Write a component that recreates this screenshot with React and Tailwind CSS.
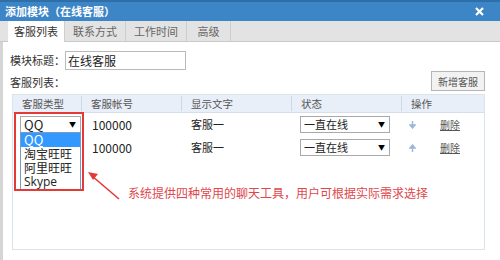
import React from "react";

const font = { fontFamily: '"Noto Sans CJK SC", "Liberation Sans", sans-serif' };

const tabs = ["客服列表", "联系方式", "工作时间", "高级"];
const rows = [
  { type: "QQ", account: "100000", text: "客服一", status: "一直在线", arrow: "down" },
  { type: "QQ", account: "100000", text: "客服一", status: "一直在线", arrow: "up" },
];

function FakeSelect({ value, className = "" }) {
  return (
    <div
      className={`flex h-[17px] items-center justify-between border border-[#a9a9a9] bg-white pl-[3px] pr-[4px] ${className}`}
    >
      <span>{value}</span>
      <span className="text-[7px] leading-none text-black">▼</span>
    </div>
  );
}

function Arrow({ dir }) {
  return (
    <svg width="7" height="8" viewBox="0 0 7 8">
      {dir === "down" ? (
        <path d="M3.5 0 V5 M1 4 L3.5 7 L6 4 Z" stroke="#9ab7dc" strokeWidth="1.4" fill="#9ab7dc" />
      ) : (
        <path d="M3.5 8 V3 M1 4 L3.5 1 L6 4 Z" stroke="#9ab7dc" strokeWidth="1.4" fill="#9ab7dc" />
      )}
    </svg>
  );
}

export default function App() {
  return (
    <div className="relative h-[260px] w-[500px] overflow-hidden bg-white text-[11px] text-[#333]" style={font}>
      {/* title bar */}
      <div className="flex h-[21px] items-center justify-between border-t-2 border-[#2f6fa8] bg-[#3c86c7] pl-[5px] pr-[16px]">
        <span className="text-[11px] font-bold text-white">添加模块（在线客服）</span>
        <svg width="9" height="9" viewBox="0 0 9 9">
          <path d="M1 1 L8 8 M8 1 L1 8" stroke="#fff" strokeWidth="2.2" />
        </svg>
      </div>

      {/* tabs */}
      <div className="flex h-[21px] items-end border-b border-[#c9c9c9] bg-[#e3e3e3] pl-[8px]">
        {tabs.map((t, i) => (
          <div
            key={t}
            className={`flex h-[20px] items-center justify-center border-r border-[#cfcfcf] ${
              i === 0 ? "w-[57px] bg-white -mb-px h-[21px]" : i === 3 ? "w-[44px]" : "w-[61px]"
            } ${i === 0 ? "text-[#333]" : "text-[#666]"}`}
          >
            {t}
          </div>
        ))}
      </div>

      <div className="flex h-[218px] border-l-[3px] border-[#d5d5d5]">
        <div className="flex-1 pl-[7px] pr-[15px]">
          <div className="mt-[9px] flex items-center">
            <span className="w-[55px]">模块标题：</span>
            <div className="flex h-[19px] w-[121px] items-center border border-[#b9b9b9] pl-[2px] text-[12px] text-[#222]">
              在线客服
            </div>
          </div>

          <div className="mt-[1px] flex items-end justify-between">
            <span className="mb-px">客服列表：</span>
            <div className="flex h-[20px] w-[54px] items-center justify-center border border-[#b5b5b5] bg-[#f2f2f2] text-[10px] text-[#555]">
              新增客服
            </div>
          </div>

          {/* table */}
          <div className="relative mt-[3px] ml-[2px] h-[156px] border border-[#dbe3ec]">
            <div className="flex h-[18px] items-center border-b border-[#d6dee9] bg-[#e9eff8] text-[10.5px] text-[#555]">
              <div className="w-[69px] border-r border-[#d0d8e3] pl-[9px]">客服类型</div>
              <div className="w-[100px] border-r border-[#d0d8e3] pl-[9px]">客服帐号</div>
              <div className="w-[110px] border-r border-[#d0d8e3] pl-[9px]">显示文字</div>
              <div className="w-[110px] border-r border-[#d0d8e3] pl-[9px]">状态</div>
              <div className="flex-1 pl-[9px]">操作</div>
            </div>

            {rows.map((r, i) => (
              <div key={i} className="flex h-[23px] items-center text-[#222]">
                <div className="w-[69px] pl-[7px]">
                  <FakeSelect value={r.type} className="w-[61px] text-[13px]" />
                </div>
                <div className="w-[100px] pl-[10px] text-[12px]">{r.account}</div>
                <div className="w-[110px] pl-[9px]">{r.text}</div>
                <div className="w-[110px] pl-[8px]">
                  <FakeSelect value={r.status} className="w-[90px] text-[11px]" />
                </div>
                <div className="flex flex-1 items-center pl-[7px]">
                  <Arrow dir={r.arrow} />
                  <span className="ml-[24px] text-[10px] text-[#555] underline">删除</span>
                </div>
              </div>
            ))}

            {/* dropdown list */}
            <div className="absolute left-[7px] top-[37px] w-[61px] border border-[#7a9cc4] bg-white text-[12px] leading-[14px] text-[#222]">
              <div className="bg-[#3399ff] pl-[3px] text-[13px] text-white">QQ</div>
              <div className="pl-[3px]">淘宝旺旺</div>
              <div className="pl-[3px]">阿里旺旺</div>
              <div className="pl-[3px]" style={{ fontFamily: '"Open Sans", sans-serif' }}>
                Skype
              </div>
            </div>

            {/* red highlight box */}
            <div className="absolute left-[1px] top-[17px] h-[79px] w-[70px] border-2 border-[#e53935]" />

            {/* annotation arrow */}
            <svg className="absolute left-[73px] top-[74px]" width="40" height="32" viewBox="0 0 40 32">
              <path d="M33 30 L6 7" stroke="#e53935" strokeWidth="1.6" />
              <path d="M2 3 L12 5 L7 11 Z" fill="#e53935" />
            </svg>

            <div className="absolute left-[115px] top-[91px] text-[12px] leading-[14px] text-[#e0474c]">
              系统提供四种常用的聊天工具，用户可根据实际需求选择
            </div>
          </div>
        </div>
      </div>
    </div>
  );
}
